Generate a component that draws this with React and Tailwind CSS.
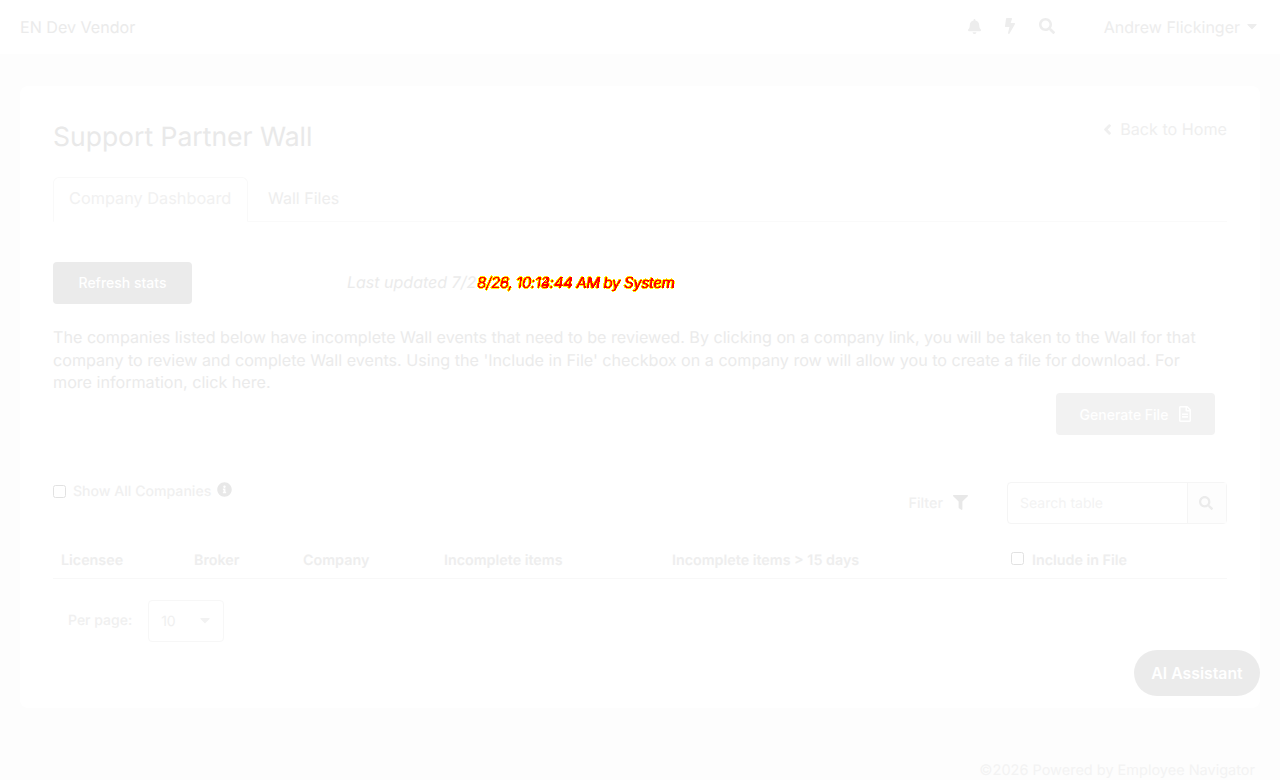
import { FaBell, FaBolt, FaSearch, FaChevronLeft, FaFilter, FaInfoCircle, FaRegFileAlt, FaCaretDown } from "react-icons/fa";

const columns = [
  { label: "Licensee", className: "w-[133px]" },
  { label: "Broker", className: "w-[109px]" },
  { label: "Company", className: "w-[141px]" },
  { label: "Incomplete items", className: "w-[228px]" },
  { label: "Incomplete items > 15 days", className: "w-[339px]" },
];

const Checkbox = () => (
  <span className="block w-[13px] h-[13px] rounded-[2.5px] border border-[#e2e2e2] bg-white shrink-0" />
);

const App = () => {
  return (
    <div className="relative w-full h-[780px] overflow-hidden bg-[#fdfdfd] font-['Inter',sans-serif] text-[#ececec] [text-rendering:geometricPrecision]">
      <svg className="absolute w-0 h-0">
        <filter id="jagged">
          <feComponentTransfer>
            <feFuncA type="discrete" tableValues="0 0 1 1" />
          </feComponentTransfer>
        </filter>
      </svg>

      <header className="flex items-center justify-between h-[54px] bg-white pl-5 pr-[21px]">
        <span className="text-[16.1px] text-[#ebebeb]">EN Dev Vendor</span>
        <div className="flex items-center">
          <div className="flex items-center text-[#ededed] mr-[49px] -mt-[2px]">
            <FaBell className="w-[15px] h-[15px]" />
            <FaBolt className="w-[16px] h-[16px] ml-5" />
            <FaSearch className="w-4 h-4 ml-[21px]" />
          </div>
          <span className="text-base text-[#ededed]">Andrew Flickinger</span>
          <FaCaretDown className="w-[16px] h-[16px] ml-[4px] -mr-[1px] -mt-[2px] text-[#ededed]" />
        </div>
      </header>

      <main className="mx-5 mt-8 h-[622px] rounded-lg bg-white px-[33px] pt-[34px] relative">
        <div className="flex items-start justify-between">
          <h1 className="text-[26.5px] leading-[34px] text-[#e9e9e9]">Support Partner Wall</h1>
          <a className="flex items-center text-[16.15px] leading-5 text-[#efefef] -mt-[1px]">
            <FaChevronLeft className="w-[11px] h-[11px] mr-[7px]" stroke="currentColor" strokeWidth={50} />
            Back to Home
          </a>
        </div>

        <nav className="flex mt-[23px] h-[45px] border-b border-[#fafafa]">
          <span className="h-[45px] w-[195px] pb-[2px] px-[15px] flex items-center border border-b-white border-[#f9f9f9] rounded-t-md text-[16.3px] text-[#f1f1f1] bg-white whitespace-nowrap">
            Company Dashboard
          </span>
          <span className="h-[45px] pb-1 px-5 flex items-center text-base text-[#eeeeee]">Wall Files</span>
        </nav>

        <div className="flex items-center mt-10">
          <button className="w-[139px] h-[42px] rounded bg-[#ebebeb] text-sm font-medium text-white">Refresh stats</button>
          <p className="relative ml-[155px] -mt-[2px] text-base italic text-[#ebebeb] whitespace-nowrap">
            Last updated 7/2
            <span className="absolute left-[130px] top-[2px] text-[15.2px] tracking-[-0.44px] text-[#ff0000] [filter:url(#jagged)] [text-shadow:1px_0_0_#ffff00,-1px_0_0_#ffff00,0_1px_0_#ffff00,0_-1px_0_#ffff00]">
              8/26, 10:13:44 AM by System
            </span>
            <span className="absolute left-[130px] top-[2px] text-[15.2px] tracking-[-0.44px] text-[#ff0000] [filter:url(#jagged)]">
              8/28, 10:14:44 AM by System
            </span>
          </p>
        </div>

        <p className="mt-[22px] w-[1160px] text-[16.14px] leading-[22.5px] text-[#ebebeb]">
          The companies listed below have incomplete Wall events that need to be reviewed. By clicking on a company link, you will be taken to the Wall for that company to review and complete Wall events. Using the 'Include in File' checkbox on a company row will allow you to create a file for download. For more information, click here.
        </p>

        <div className="flex justify-end pr-3 -mt-[1px]">
          <button className="flex items-center justify-center gap-[10px] w-[159px] h-[42px] pl-[1px] rounded bg-[#f2f2f2] text-sm font-medium text-white">
            <span className="pt-[2px]">Generate File</span>
            <FaRegFileAlt className="w-[14px] h-[16px]" />
          </button>
        </div>

        <div className="flex items-start justify-between mt-[47px]">
          <label className="flex items-center gap-[7px] -mt-[3px] text-[14.1px] font-medium text-[#f0f0f0]">
            <Checkbox />
            <span className="pt-[2px] pb-[2px]">Show All Companies</span>
            <FaInfoCircle className="w-[15px] h-[15px] -mt-[3px] -ml-[1px] text-[#e8e8e8]" />
          </label>
          <div className="flex items-center">
            <span className="text-[14.3px] font-medium text-[#f0f0f0] pt-[2px] mr-[1px]">Filter</span>
            <FaFilter className="w-[15px] h-[15px] ml-[9px] text-[#e8e8e8]" />
            <div className="flex ml-[39px] w-[220px] h-[42px] rounded border border-[#f5f5f5]">
              <span className="flex-1 flex items-center pl-3 pt-[2px] text-sm text-[#f3f3f3]">Search table</span>
              <span className="w-[39px] flex items-center justify-center pr-[2px] border-l border-[#f5f5f5] bg-[#fdfdfd]">
                <FaSearch className="w-[14px] h-[14px] text-[#ebebeb]" />
              </span>
            </div>
          </div>
        </div>

        <div className="flex items-center h-[36px] mt-[19px] pl-2 pt-[2px] border-b border-[#f8f8f8] text-[14.3px] font-semibold text-[#eeeeee]">
          {columns.map((c) => (
            <span key={c.label} className={c.className}>{c.label}</span>
          ))}
          <span className="flex items-center gap-2">
            <span className="-mt-[5px]"><Checkbox /></span>
            Include in File
          </span>
        </div>

        <div className="flex items-center mt-[21px] pl-[15px]">
          <span className="text-sm font-medium text-[#f0f0f0]">Per page:</span>
          <div className="flex items-center justify-between ml-4 w-[76px] h-[42px] pl-3 pr-[10px] rounded border border-[#f7f7f7]">
            <span className="text-sm text-[#f0f0f0] pt-[2px]">10</span>
            <FaCaretDown className="w-[16px] h-[16px] -mt-[2px] text-[#f2f2f2]" />
          </div>
        </div>
      </main>

      <button className="absolute right-5 top-[650px] w-[126px] h-[46px] pt-[2px] rounded-full bg-[#ebebeb] text-[15.8px] font-semibold text-white">
        AI Assistant
      </button>

      <footer className="absolute right-[25px] top-[760px] text-[14.5px] text-[#f3f3f3]">
        ©2026 Powered by Employee Navigator
      </footer>
    </div>
  );
};

export default App;
